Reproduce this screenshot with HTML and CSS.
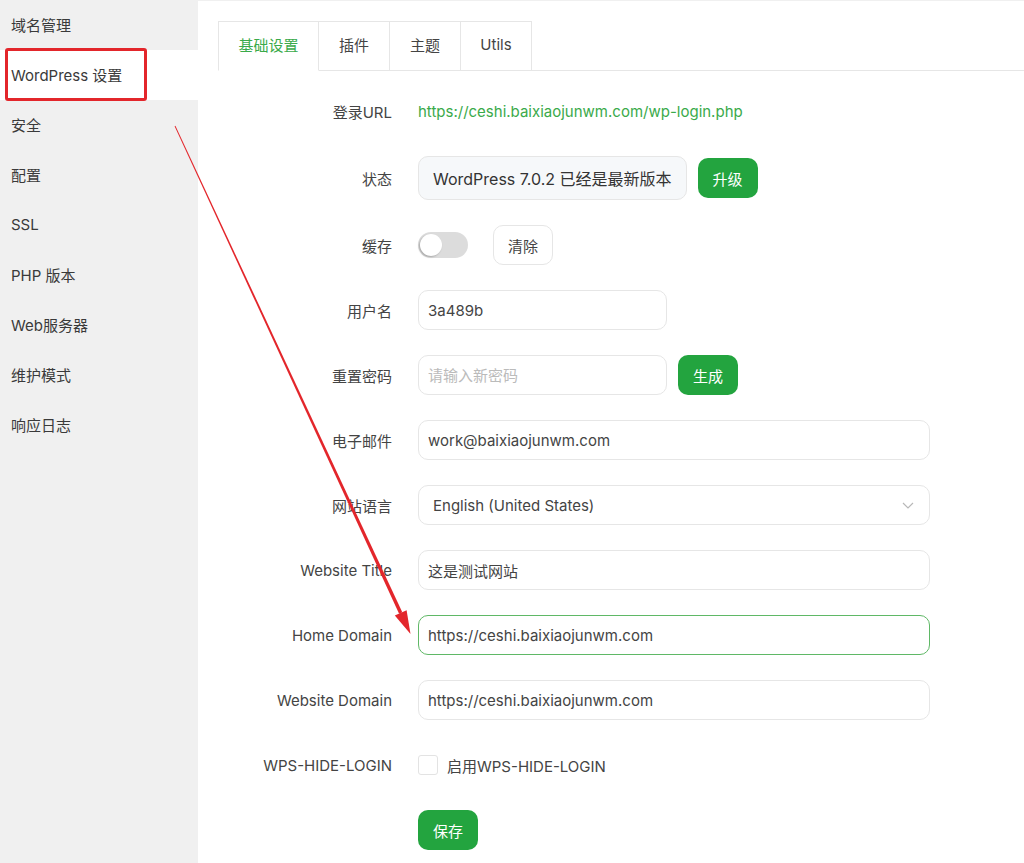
FILE: index.html
```html
<!DOCTYPE html>
<html lang="zh-CN">

<head>
    <meta charset="UTF-8">
    <meta name="viewport" content="width=device-width, initial-scale=1.0">
    <title>WordPress 设置</title>
    <link rel="stylesheet" href="styles.css">
</head>

<body>
    <div class="layout">
        <aside class="sidebar">
            <a class="side-item">域名管理</a>
            <a class="side-item active">WordPress 设置</a>
            <a class="side-item">安全</a>
            <a class="side-item">配置</a>
            <a class="side-item">SSL</a>
            <a class="side-item">PHP 版本</a>
            <a class="side-item">Web服务器</a>
            <a class="side-item">维护模式</a>
            <a class="side-item">响应日志</a>
        </aside>

        <main class="main">
            <div class="tabs">
                <div class="tab active">基础设置</div>
                <div class="tab">插件</div>
                <div class="tab">主题</div>
                <div class="tab">Utils</div>
                <div class="tab-rest"></div>
            </div>

            <form class="form">
                <label class="label">登录URL</label>
                <div class="field"><a class="link">https://ceshi.baixiaojunwm.com/wp-login.php</a></div>

                <label class="label">状态</label>
                <div class="field">
                    <span class="status">WordPress 7.0.2 已经是最新版本</span>
                    <button type="button" class="btn-green">升级</button>
                </div>

                <label class="label">缓存</label>
                <div class="field">
                    <span class="switch"><span class="knob"></span></span>
                    <button type="button" class="btn-plain">清除</button>
                </div>

                <label class="label">用户名</label>
                <div class="field"><input class="input short" value="3a489b"></div>

                <label class="label">重置密码</label>
                <div class="field">
                    <input class="input short" placeholder="请输入新密码">
                    <button type="button" class="btn-green">生成</button>
                </div>

                <label class="label">电子邮件</label>
                <div class="field"><input class="input" value="work@baixiaojunwm.com"></div>

                <label class="label">网站语言</label>
                <div class="field">
                    <div class="select">
                        <span>English (United States)</span>
                        <svg width="14" height="14" viewBox="0 0 14 14"><path d="M2 5l5 5 5-5" fill="none" stroke="#b8b8b8" stroke-width="1.2"/></svg>
                    </div>
                </div>

                <label class="label">Website Title</label>
                <div class="field"><input class="input" value="这是测试网站"></div>

                <label class="label">Home Domain</label>
                <div class="field"><input class="input focus" value="https://ceshi.baixiaojunwm.com"></div>

                <label class="label">Website Domain</label>
                <div class="field"><input class="input" value="https://ceshi.baixiaojunwm.com"></div>

                <label class="label">WPS-HIDE-LOGIN</label>
                <div class="field">
                    <span class="checkbox"></span>
                    <span class="check-text">启用WPS-HIDE-LOGIN</span>
                </div>

                <span></span>
                <div class="field"><button type="button" class="btn-green">保存</button></div>
            </form>
        </main>
    </div>

    <!-- annotation overlay -->
    <div class="mark-box"></div>
    <svg class="mark-arrow" width="1024" height="863" viewBox="0 0 1024 863">
        <polygon points="174.6,126.2 175.4,125.8 402.3,612.3 399.1,613.7" fill="#e3262b"/>
        <polygon points="410.5,634 394.8,615.6 406.6,610.2" fill="#e3262b"/>
    </svg>
</body>

</html>
```

FILE: styles.css
```css
body {
    margin: 0;
    font-family: Inter, "Noto Sans CJK SC", sans-serif;
    color: #333;
    background: #fff;
}

.layout {
    display: flex;
    min-height: 863px;
}

.sidebar {
    width: 198px;
    flex-shrink: 0;
    background: #f0f0f0;
    display: flex;
    flex-direction: column;
}

.side-item {
    height: 50px;
    display: flex;
    align-items: center;
    padding-left: 11px;
    padding-bottom: 2px;
    box-sizing: border-box;
    font-size: 15px;
    color: #3a3a3a;
}

.side-item.active {
    background: #fff;
}

.main {
    flex: 1;
    padding-top: 20px;
    padding-left: 20px;
    border-top: 1px solid #f0f0f0;
}

.tabs {
    display: flex;
    height: 50px;
}

.tab {
    box-sizing: border-box;
    width: 71px;
    display: flex;
    align-items: center;
    justify-content: center;
    padding-bottom: 3px;
    border: 1px solid #e6e6e6;
    border-left: none;
    font-size: 15px;
    color: #444;
}

.tab.active {
    width: 101px;
    border-left: 1px solid #e6e6e6;
    border-bottom-color: transparent;
    color: #3aaa4a;
}

.tab-rest {
    flex: 1;
    border-bottom: 1px solid #e6e6e6;
}

.form {
    display: grid;
    grid-template-columns: 174px 512px;
    column-gap: 26px;
    row-gap: 25px;
    margin-top: 20px;
    align-items: center;
}

.label {
    text-align: right;
    font-size: 15px;
    color: #444;
}

.field {
    display: flex;
    align-items: center;
    min-height: 40px;
}

.link {
    color: #3aaa4a;
    font-size: 15px;
}

.status {
    box-sizing: border-box;
    height: 44px;
    display: flex;
    align-items: center;
    padding: 0 14px;
    background: #f6f8fa;
    border: 1px solid #e6e6e6;
    border-radius: 10px;
    font-size: 16px;
    color: #333;
    margin-right: 11px;
}

.status + .btn-green {
    margin-left: 0;
}

.btn-green {
    height: 40px;
    width: 60px;
    border: none;
    border-radius: 10px;
    background: #23a43f;
    color: #fff;
    font-family: inherit;
    font-size: 15px;
    font-weight: 400;
    cursor: pointer;
}

.field .input.short + .btn-green {
    margin-left: 11px;
}

.btn-plain {
    height: 40px;
    width: 60px;
    border: 1px solid #e6e6e6;
    border-radius: 10px;
    background: #fff;
    color: #444;
    font-family: inherit;
    font-size: 15px;
    margin-left: 25px;
}

.switch {
    width: 50px;
    height: 26px;
    border-radius: 13px;
    background: #dcdcdc;
    display: flex;
    align-items: center;
    padding: 0 2px;
    box-sizing: border-box;
}

.knob {
    width: 22px;
    height: 22px;
    border-radius: 50%;
    background: #fff;
    box-shadow: -1px 1px 2px rgba(0, 0, 0, 0.25);
}

.input {
    box-sizing: border-box;
    width: 512px;
    height: 40px;
    padding: 0 9px;
    border: 1px solid #e6e6e6;
    border-radius: 10px;
    font-family: inherit;
    font-size: 15px;
    color: #444;
    outline: none;
}

.input.short {
    width: 249px;
}

.input::placeholder {
    color: #bbb;
}

.input.focus {
    border-color: #5fb866;
}

.select {
    box-sizing: border-box;
    width: 512px;
    height: 40px;
    padding: 0 14px;
    border: 1px solid #e6e6e6;
    border-radius: 10px;
    display: flex;
    align-items: center;
    justify-content: space-between;
    font-size: 15px;
    color: #444;
}

.checkbox {
    box-sizing: border-box;
    width: 20px;
    height: 20px;
    border: 1px solid #e3e3e3;
    border-radius: 3px;
    background: #fff;
}

.check-text {
    margin-left: 9px;
    font-size: 15px;
    color: #444;
}

.mark-box {
    position: absolute;
    left: 5px;
    top: 48px;
    width: 136px;
    height: 47px;
    border: 3.5px solid #e3262b;
    border-radius: 3px;
}

.mark-arrow {
    position: absolute;
    left: 0;
    top: 0;
    pointer-events: none;
}
```
